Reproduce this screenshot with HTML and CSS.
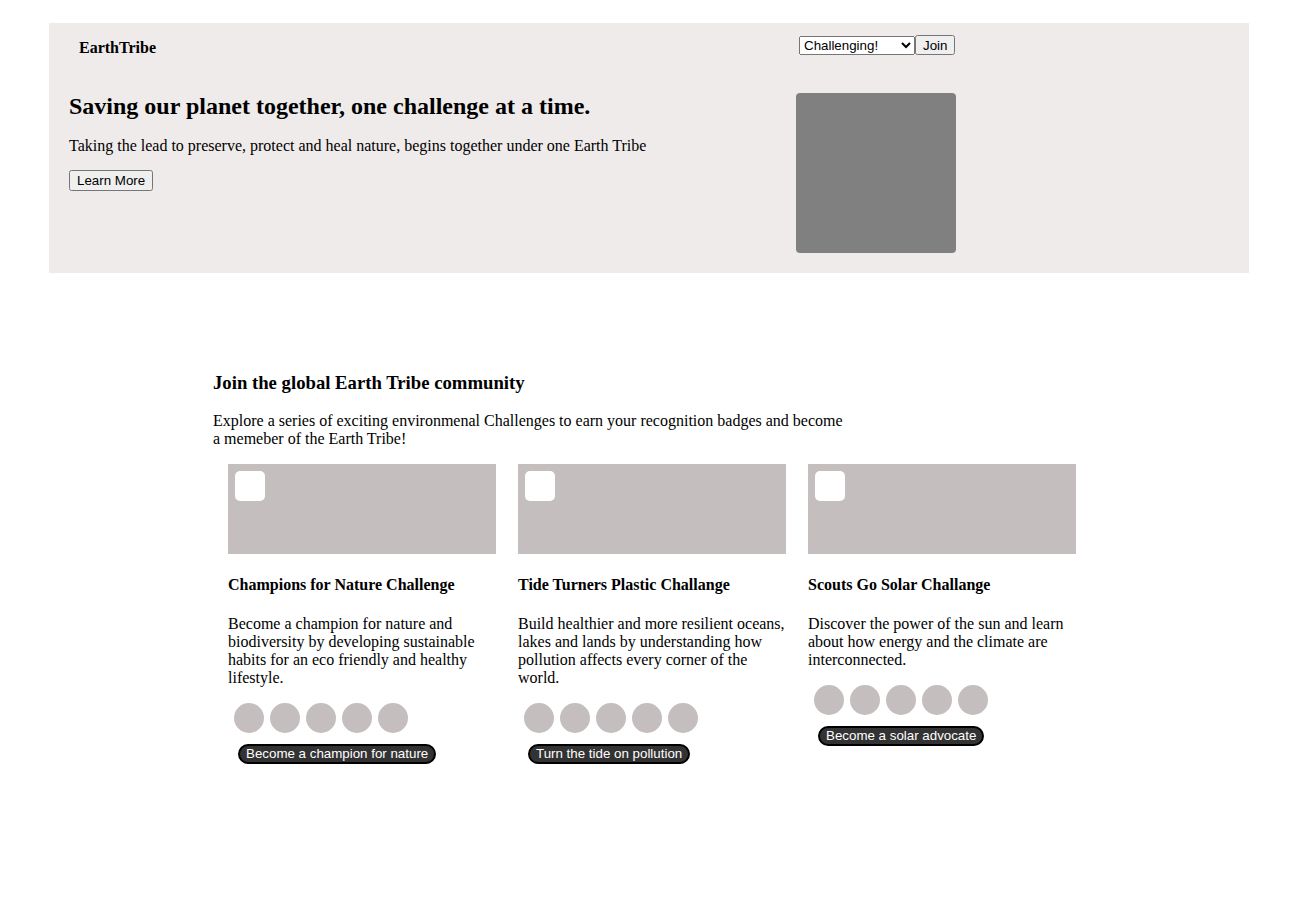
FILE: index.html
```html
<!DOCTYPE html>
<html lang="en">
<head>
<meta charset="utf-8">
<title>EarthTribe</title>
<link rel="stylesheet" href="styles.css">
</head>
<body>
<header class="hero">
  <div class="logo">EarthTribe</div>
  <div class="controls"><select class="ctl-select"><option>Challenging!</option></select><button class="ctl-btn ctl-join">Join</button></div>
  <div class="hero-text">
    <h2 class="hero-title">Saving our planet together, one challenge at a time.</h2>
    <p class="hero-sub">Taking the lead to preserve, protect and heal nature, begins together under one Earth Tribe</p>
    <button class="ctl-btn">Learn More</button>
  </div>
  <div class="hero-image"></div>
</header>

<section class="community">
  <h3 class="community-title">Join the global Earth Tribe community</h3>
  <p class="community-text">Explore a series of exciting environmenal Challenges to earn your recognition badges and become a memeber of the Earth Tribe!</p>
  <div class="cards">
    <article class="card">
      <div class="card-image"><span class="card-icon"></span></div>
      <h4 class="card-title">Champions for Nature Challenge</h4>
      <p class="card-text">Become a champion for nature and biodiversity by developing sustainable habits for an eco friendly and healthy lifestyle.</p>
      <div class="badges"><span class="badge"></span><span class="badge"></span><span class="badge"></span><span class="badge"></span><span class="badge"></span></div>
      <button class="pill">Become a champion for nature</button>
    </article>
    <article class="card">
      <div class="card-image"><span class="card-icon"></span></div>
      <h4 class="card-title">Tide Turners Plastic Challange</h4>
      <p class="card-text">Build healthier and more resilient oceans, lakes and lands by understanding how pollution affects every corner of the world.</p>
      <div class="badges"><span class="badge"></span><span class="badge"></span><span class="badge"></span><span class="badge"></span><span class="badge"></span></div>
      <button class="pill">Turn the tide on pollution</button>
    </article>
    <article class="card">
      <div class="card-image"><span class="card-icon"></span></div>
      <h4 class="card-title">Scouts Go Solar Challange</h4>
      <p class="card-text">Discover the power of the sun and learn about how energy and the climate are interconnected.</p>
      <div class="badges"><span class="badge"></span><span class="badge"></span><span class="badge"></span><span class="badge"></span><span class="badge"></span></div>
      <button class="pill">Become a solar advocate</button>
    </article>
  </div>
</section>
</body>
</html>
```

FILE: styles.css
```css
body {
  margin: 8px;
  font-family: "Liberation Serif", "Times New Roman", serif;
  font-size: 16px;
  color: #000;
  background: #fff;
}

.hero {
  margin: 15px 0 0 41px;
  width: 1200px;
  box-sizing: border-box;
  background: #efebeb;
  padding: 13px 20px 20px;
  display: grid;
  grid-template-columns: 727px 160px;
  grid-template-rows: 57px auto;
}

.logo {
  font-weight: bold;
  padding: 3px 0 0 10px;
}

.controls {
  display: flex;
  align-items: flex-start;
  padding-left: 3px;
}

.ctl-select {
  font-family: "Liberation Sans", Arial, sans-serif;
  font-size: 13.33px;
  width: 116px;
  height: 19px;
  margin: 0;
}

.ctl-btn {
  font-family: "Liberation Sans", Arial, sans-serif;
  font-size: 13.33px;
  margin: 0;
}

.ctl-join {
  margin-top: -1px;
  height: 20px;
}

.hero-title {
  font-size: 24px;
  margin: 0 0 17px;
}

.hero-sub {
  margin: 0 0 15px;
}

.hero-image {
  width: 160px;
  height: 160px;
  background: #808080;
  border-radius: 4px;
}

.community {
  width: 881px;
  margin: 0 auto;
  padding-top: 80px;
}

.community-title {
  font-size: 18.72px;
  margin: 18.72px 0;
}

.community-text {
  max-width: 640px;
  margin: 0 0 16px;
}

.cards {
  display: flex;
  gap: 22px;
  padding: 0 15px;
}

.card {
  width: 268px;
}

.card-image {
  height: 90px;
  background: #c4bebe;
  padding: 7px;
  box-sizing: border-box;
}

.card-icon {
  display: block;
  width: 30px;
  height: 30px;
  background: #fff;
  border-radius: 5px;
}

.card-title {
  font-size: 16px;
  margin: 21.28px 0;
}

.card-text {
  margin: 16px 0;
}

.badges {
  display: flex;
  gap: 6px;
  padding-left: 6px;
}

.badge {
  width: 30px;
  height: 30px;
  border-radius: 50%;
  background: #c4bebe;
}

.pill {
  margin: 11px 0 0 10px;
  font-family: "Liberation Sans", Arial, sans-serif;
  font-size: 13.33px;
  color: #fff;
  background: #333;
  border: 2px solid #000;
  border-radius: 10px;
  padding: 1px 6px;
  height: 20px;
  line-height: 14px;
}
```
